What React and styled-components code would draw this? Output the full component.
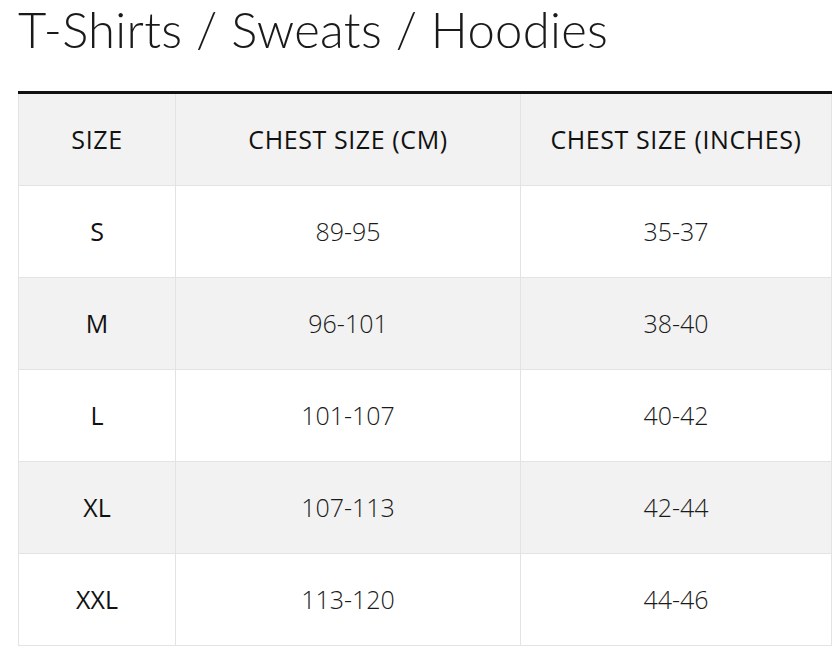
import styled, { createGlobalStyle } from "styled-components";

const GlobalStyle = createGlobalStyle`
  body {
    margin: 0;
    background: #fff;
    font-family: "Open Sans", Lato, sans-serif;
    color: #111;
  }
`;

const rows = [
  ["S", "89-95", "35-37"],
  ["M", "96-101", "38-40"],
  ["L", "101-107", "40-42"],
  ["XL", "107-113", "42-44"],
  ["XXL", "113-120", "44-46"],
];

function App() {
  return (
    <>
      <GlobalStyle />
      <Page>
        <Title>T-Shirts / Sweats / Hoodies</Title>
        <SizeTable>
          <colgroup>
            <col style={{ width: 157 }} />
            <col style={{ width: 345 }} />
            <col style={{ width: 311 }} />
          </colgroup>
          <thead>
            <tr>
              <HeadCell>SIZE</HeadCell>
              <HeadCell>CHEST SIZE (CM)</HeadCell>
              <HeadCell>CHEST SIZE (INCHES)</HeadCell>
            </tr>
          </thead>
          <tbody>
            {rows.map((row, index) => (
              <Row key={row[0]} $shaded={index % 2 === 1}>
                <SizeCell>{row[0]}</SizeCell>
                <Cell>{row[1]}</Cell>
                <Cell>{row[2]}</Cell>
              </Row>
            ))}
          </tbody>
        </SizeTable>
      </Page>
    </>
  );
}

const Page = styled.div`
  padding: 0 9px 0 18px;
`;

const Title = styled.h1`
  margin: 0;
  height: 91px;
  font-family: Lato, sans-serif;
  font-size: 49px;
  font-weight: 300;
  line-height: 58px;
  color: #1a1a1a;
  letter-spacing: 0.3px;
`;

const SizeTable = styled.table`
  width: 813px;
  border-collapse: collapse;
  table-layout: fixed;
  border-top: 3px solid #111;
`;

const HeadCell = styled.th`
  height: 89px;
  padding: 0 0 2px;
  background: #f2f2f2;
  border: 1px solid #e3e3e3;
  border-top: none;
  font-size: 25px;
  font-weight: 400;
  line-height: 30px;
  letter-spacing: 0.6px;
  color: #111;
  text-align: center;
  vertical-align: middle;
`;

const Row = styled.tr`
  background: ${(p) => (p.$shaded ? "#f2f2f2" : "#fff")};
`;

const Cell = styled.td`
  height: 89px;
  padding: 0 0 2px;
  border: 1px solid #e3e3e3;
  font-size: 25px;
  font-weight: 300;
  line-height: 30px;
  color: #1a1a1a;
  text-align: center;
  vertical-align: middle;
`;

const SizeCell = styled(Cell)`
  color: #111;
  font-weight: 400;
`;

export default App;
